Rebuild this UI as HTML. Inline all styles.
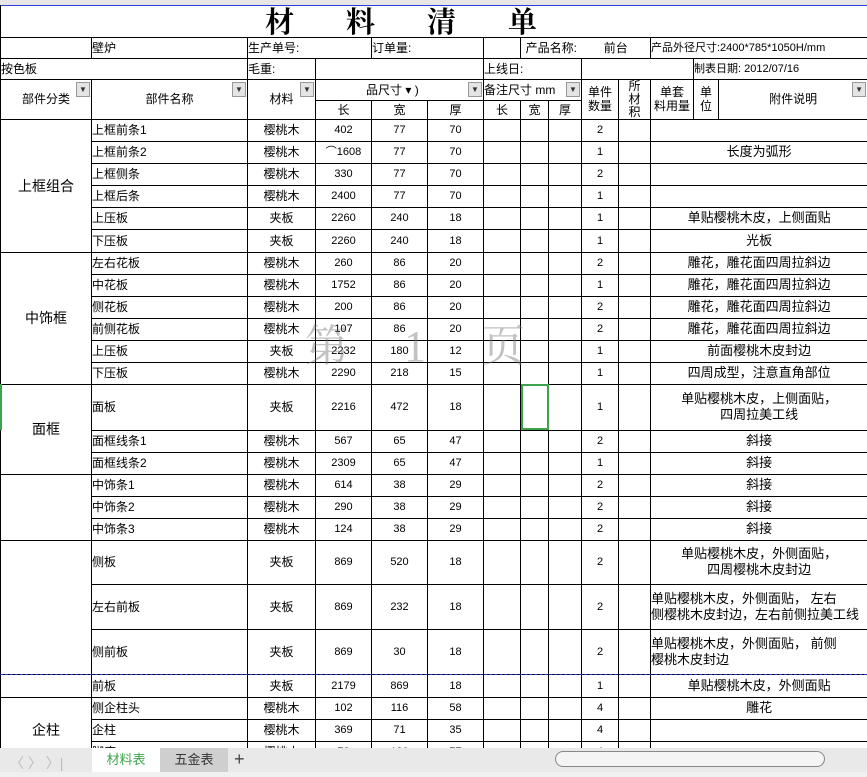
<!DOCTYPE html>
<html><head><meta charset="utf-8"><style>
body{margin:0;width:867px;height:777px;overflow:hidden;background:#fff;font-family:"Liberation Sans","Noto Sans CJK SC",sans-serif;position:relative}
.top{position:absolute;left:0;top:0;width:867px;height:5px;background:#e6e6e6;border-bottom:1px solid #2b3fd6}
.wrap{position:absolute;left:0;top:5px;width:867px;height:743px;overflow:hidden}
table{border-collapse:collapse;table-layout:fixed;width:867px}
td{border:1px solid #000;padding:0;font-size:12px;text-align:center;white-space:nowrap;overflow:hidden;position:relative;line-height:14px}
.l{text-align:left}
.n{font-size:11px;font-family:"Liberation Sans Narrow","Liberation Sans",sans-serif}
.c{font-size:13px}
.g{font-size:14px}
.w{white-space:normal;font-size:13px;line-height:16px}
.f{position:absolute;right:1px;top:2px;width:12px;height:13px;background:#e4e4e4;border:1px solid #999;font-size:8px;line-height:13px;text-align:center;color:#333}
.bar{position:absolute;left:0;top:748px;width:867px;height:29px;background:#e9e9e9}
</style></head><body>
<div class="top"></div>
<div class="wrap"><table>
<colgroup><col style="width:91px"><col style="width:156px"><col style="width:68px"><col style="width:56px"><col style="width:56px"><col style="width:56px"><col style="width:37px"><col style="width:28px"><col style="width:33px"><col style="width:37px"><col style="width:32px"><col style="width:43px"><col style="width:25px"><col style="width:149px"></colgroup>
<tr style="height:32px"><td colspan="14" style="font-size:29px;font-family:'Noto Serif CJK SC','Liberation Serif',serif;font-weight:bold;letter-spacing:52px;text-align:left;padding-left:264px;border-top:none;line-height:30px">材料清单</td></tr>
<tr style="height:21px"><td></td><td class="l">壁炉</td><td class="l" colspan="2">生产单号:</td><td class="l" colspan="2">订单量:</td><td></td><td colspan="2" style="border-right:none">产品名称:</td><td colspan="2" style="border-left:none">前台</td><td class="l" colspan="3" style="font-size:11px">产品外径尺寸:2400*785*1050H/mm</td></tr>
<tr style="height:21px"><td class="l" colspan="2">按色板</td><td class="l">毛重:</td><td colspan="3"></td><td class="l" colspan="3">上线日:</td><td colspan="3"></td><td class="l" colspan="2" style="font-size:11px">制表日期: 2012/07/16</td></tr>
<tr style="height:21px"><td rowspan="2">部件分类<span class="f">▼</span></td><td rowspan="2">部件名称<span class="f">▼</span></td><td rowspan="2">材料<span class="f">▼</span></td><td colspan="3" style="text-align:left;padding-left:50px">品尺寸 ▾ )<span class="f">▼</span></td><td colspan="3" class="l">备注尺寸 mm<span class="f">▼</span></td><td rowspan="2">单件<br>数量</td><td rowspan="2" style="line-height:13px">所<br>材<br>积</td><td rowspan="2">单套<br>料用量</td><td rowspan="2">单<br>位</td><td rowspan="2">附件说明<span class="f">▼</span></td></tr>
<tr style="height:19px"><td>长</td><td>宽</td><td>厚</td><td>长</td><td>宽</td><td>厚</td></tr>

<tr style="height:22px"><td rowspan="6" class="g">上框组合</td><td class="l">上框前条1</td><td>樱桃木</td><td class="n">402</td><td class="n">77</td><td class="n">70</td><td></td><td></td><td></td><td class="n">2</td><td></td><td colspan="3"></td></tr>
<tr style="height:22px"><td class="l">上框前条2</td><td>樱桃木</td><td class="n">⌒1608</td><td class="n">77</td><td class="n">70</td><td></td><td></td><td></td><td class="n">1</td><td></td><td colspan="3" class="c">长度为弧形</td></tr>
<tr style="height:22px"><td class="l">上框侧条</td><td>樱桃木</td><td class="n">330</td><td class="n">77</td><td class="n">70</td><td></td><td></td><td></td><td class="n">2</td><td></td><td colspan="3"></td></tr>
<tr style="height:22px"><td class="l">上框后条</td><td>樱桃木</td><td class="n">2400</td><td class="n">77</td><td class="n">70</td><td></td><td></td><td></td><td class="n">1</td><td></td><td colspan="3"></td></tr>
<tr style="height:22px"><td class="l">上压板</td><td>夹板</td><td class="n">2260</td><td class="n">240</td><td class="n">18</td><td></td><td></td><td></td><td class="n">1</td><td></td><td colspan="3" class="c">单贴樱桃木皮，上侧面贴</td></tr>
<tr style="height:23px"><td class="l">下压板</td><td>夹板</td><td class="n">2260</td><td class="n">240</td><td class="n">18</td><td></td><td></td><td></td><td class="n">1</td><td></td><td colspan="3" class="c">光板</td></tr>

<tr style="height:22px"><td rowspan="6" class="g">中饰框</td><td class="l">左右花板</td><td>樱桃木</td><td class="n">260</td><td class="n">86</td><td class="n">20</td><td></td><td></td><td></td><td class="n">2</td><td></td><td colspan="3" class="c">雕花，雕花面四周拉斜边</td></tr>
<tr style="height:22px"><td class="l">中花板</td><td>樱桃木</td><td class="n">1752</td><td class="n">86</td><td class="n">20</td><td></td><td></td><td></td><td class="n">1</td><td></td><td colspan="3" class="c">雕花，雕花面四周拉斜边</td></tr>
<tr style="height:22px"><td class="l">侧花板</td><td>樱桃木</td><td class="n">200</td><td class="n">86</td><td class="n">20</td><td></td><td></td><td></td><td class="n">2</td><td></td><td colspan="3" class="c">雕花，雕花面四周拉斜边</td></tr>
<tr style="height:22px"><td class="l">前侧花板</td><td>樱桃木</td><td class="n">107</td><td class="n">86</td><td class="n">20</td><td></td><td></td><td></td><td class="n">2</td><td></td><td colspan="3" class="c">雕花，雕花面四周拉斜边</td></tr>
<tr style="height:22px"><td class="l">上压板</td><td>夹板</td><td class="n">2232</td><td class="n">180</td><td class="n">12</td><td></td><td></td><td></td><td class="n">1</td><td></td><td colspan="3" class="c">前面樱桃木皮封边</td></tr>
<tr style="height:22px"><td class="l">下压板</td><td>樱桃木</td><td class="n">2290</td><td class="n">218</td><td class="n">15</td><td></td><td></td><td></td><td class="n">1</td><td></td><td colspan="3" class="c">四周成型，注意直角部位</td></tr>

<tr style="height:46px"><td rowspan="3" class="g">面框</td><td class="l">面板</td><td>夹板</td><td class="n">2216</td><td class="n">472</td><td class="n">18</td><td></td><td style="outline:2px solid #3fa34d;outline-offset:-2px"></td><td></td><td class="n">1</td><td></td><td colspan="3" class="w">单贴樱桃木皮，上侧面贴，<br>四周拉美工线</td></tr>
<tr style="height:22px"><td class="l">面框线条1</td><td>樱桃木</td><td class="n">567</td><td class="n">65</td><td class="n">47</td><td></td><td></td><td></td><td class="n">2</td><td></td><td colspan="3" class="c">斜接</td></tr>
<tr style="height:22px"><td class="l">面框线条2</td><td>樱桃木</td><td class="n">2309</td><td class="n">65</td><td class="n">47</td><td></td><td></td><td></td><td class="n">1</td><td></td><td colspan="3" class="c">斜接</td></tr>

<tr style="height:22px"><td rowspan="3"></td><td class="l">中饰条1</td><td>樱桃木</td><td class="n">614</td><td class="n">38</td><td class="n">29</td><td></td><td></td><td></td><td class="n">2</td><td></td><td colspan="3" class="c">斜接</td></tr>
<tr style="height:22px"><td class="l">中饰条2</td><td>樱桃木</td><td class="n">290</td><td class="n">38</td><td class="n">29</td><td></td><td></td><td></td><td class="n">2</td><td></td><td colspan="3" class="c">斜接</td></tr>
<tr style="height:22px"><td class="l">中饰条3</td><td>樱桃木</td><td class="n">124</td><td class="n">38</td><td class="n">29</td><td></td><td></td><td></td><td class="n">2</td><td></td><td colspan="3" class="c">斜接</td></tr>
<tr style="height:44px"><td rowspan="3"></td><td class="l">侧板</td><td>夹板</td><td class="n">869</td><td class="n">520</td><td class="n">18</td><td></td><td></td><td></td><td class="n">2</td><td></td><td colspan="3" class="w">单贴樱桃木皮，外侧面贴，<br>四周樱桃木皮封边</td></tr>
<tr style="height:45px"><td class="l">左右前板</td><td>夹板</td><td class="n">869</td><td class="n">232</td><td class="n">18</td><td></td><td></td><td></td><td class="n">2</td><td></td><td colspan="3" class="w" style="text-align:left">单贴樱桃木皮，外侧面贴， 左右<br>侧樱桃木皮封边，左右前侧拉美工线</td></tr>
<tr style="height:45px"><td class="l">侧前板</td><td>夹板</td><td class="n">869</td><td class="n">30</td><td class="n">18</td><td></td><td></td><td></td><td class="n">2</td><td></td><td colspan="3" class="w" style="text-align:left">单贴樱桃木皮，外侧面贴， 前侧<br>樱桃木皮封边</td></tr>
<tr style="height:23px"><td></td><td class="l">前板</td><td>夹板</td><td class="n">2179</td><td class="n">869</td><td class="n">18</td><td></td><td></td><td></td><td class="n">1</td><td></td><td colspan="3" class="c">单贴樱桃木皮，外侧面贴</td></tr>
<tr style="height:22px"><td rowspan="3" class="g">企柱</td><td class="l">侧企柱头</td><td>樱桃木</td><td class="n">102</td><td class="n">116</td><td class="n">58</td><td></td><td></td><td></td><td class="n">4</td><td></td><td colspan="3" class="c">雕花</td></tr>
<tr style="height:22px"><td class="l">企柱</td><td>樱桃木</td><td class="n">369</td><td class="n">71</td><td class="n">35</td><td></td><td></td><td></td><td class="n">4</td><td></td><td colspan="3"></td></tr>
<tr style="height:22px"><td class="l">脚座</td><td>樱桃木</td><td class="n">78</td><td class="n">120</td><td class="n">77</td><td></td><td></td><td></td><td class="n">4</td><td></td><td colspan="3"></td></tr>
</table></div>
<div style="position:absolute;left:0;top:674px;width:867px;height:0;border-top:1px dashed #2233cc"></div>
<div style="position:absolute;left:0;top:384px;width:2px;height:46px;background:#3fa34d"></div>
<div style="position:absolute;left:305px;top:310px;font-size:44px;color:rgba(120,120,120,0.45);font-family:'Liberation Serif','Noto Serif CJK SC',serif;letter-spacing:22px">第 1 页</div>
<div class="bar">
<div style="position:absolute;left:10px;top:5px;color:#bbb;font-size:14px">〈 〉 〉|</div>
<div style="position:absolute;left:92px;top:0;width:68px;height:24px;background:#fff;color:#3fa34d;font-size:13px;line-height:24px;text-align:center">材料表</div>
<div style="position:absolute;left:160px;top:0;width:68px;height:24px;background:#cfcfcf;color:#333;font-size:13px;line-height:24px;text-align:center">五金表</div>
<div style="position:absolute;left:234px;top:0;font-size:18px;line-height:22px;color:#444">+</div>
<div style="position:absolute;left:555px;top:3px;width:268px;height:14px;border:1px solid #888;border-radius:8px;background:#f4f4f4"></div>
<div style="position:absolute;left:0;top:24px;width:867px;height:5px;background:#f0f0f0"></div>
</div>
</body></html>
